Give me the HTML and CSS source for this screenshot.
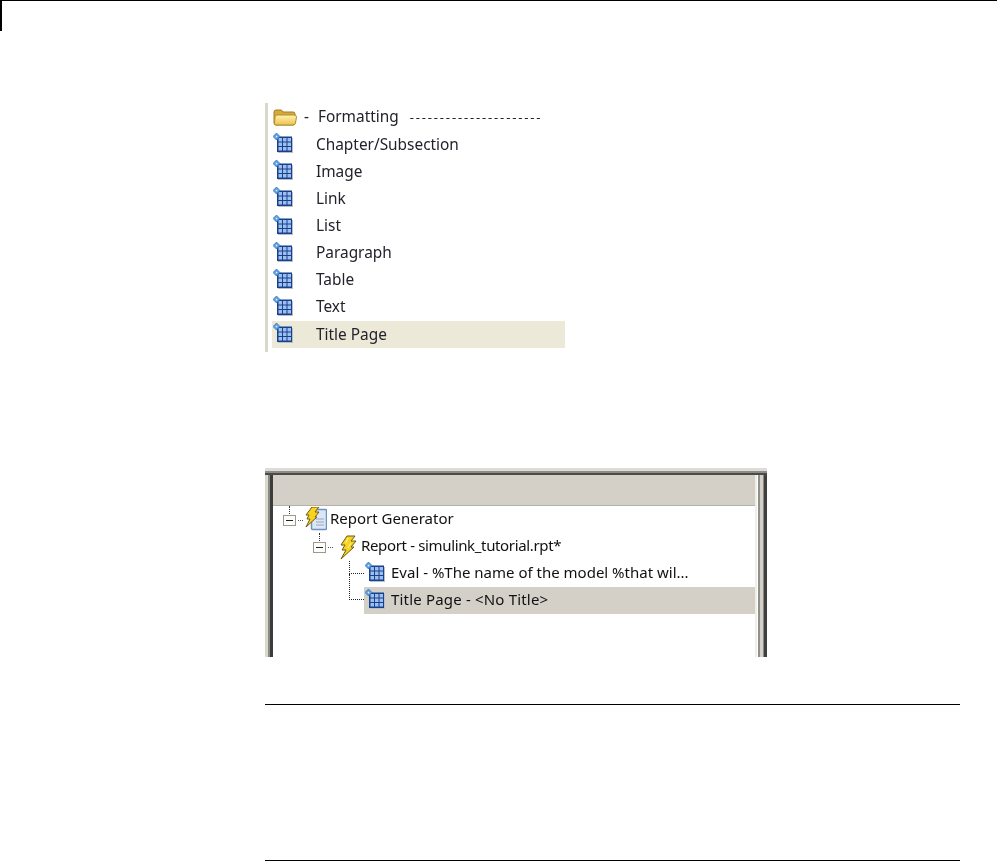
FILE: index.html
```html
<!DOCTYPE html>
<html lang="en">
<head>
<meta charset="utf-8">
<title>Report components</title>
<link rel="stylesheet" href="styles.css">
</head>
<body>
<svg class="defs" width="0" height="0" aria-hidden="true">
  <defs>
    <linearGradient id="folderFront" x1="0" y1="0" x2="0" y2="1">
      <stop offset="0" stop-color="#fff3b0"/>
      <stop offset="1" stop-color="#eec24c"/>
    </linearGradient>
    <symbol id="tbl" viewBox="0 0 20 20">
      <rect x="5" y="5" width="15" height="15" fill="#b9bec8"/>
      <rect x="4" y="3.500" width="15" height="15.500" fill="#17418f"/>
      <g fill="#9dbfee">
        <rect x="5.500" y="5" width="3.500" height="3.500"/><rect x="10" y="5" width="3.500" height="3.500"/><rect x="14.500" y="5" width="3.500" height="3.500"/>
        <rect x="5.500" y="9.500" width="3.500" height="3.500"/><rect x="10" y="9.500" width="3.500" height="3.500"/><rect x="14.500" y="9.500" width="3.500" height="3.500"/>
        <rect x="5.500" y="14" width="3.500" height="3.500"/><rect x="10" y="14" width="3.500" height="3.500"/><rect x="14.500" y="14" width="3.500" height="3.500"/>
      </g>
      <path d="M3.500 0 L7 3.500 L3.500 7 L0 3.500 Z" fill="#5aa0e4" stroke="#2c6cb0" stroke-width=".7"/>
      <rect x="2.800" y="2.800" width="1.500" height="1.500" fill="#e4f0fc"/>
    </symbol>
    <symbol id="bolt" viewBox="0 0 18 24">
      <path d="M8 1 L16 1 L12 6 L17 6 L12 12 L15 12 L2 24 L7 15 L3 15 L6 10 L2 10 Z" fill="#f7d21e" stroke="#6e5a10" stroke-width="1"/>
      <path d="M9 3 L7 8 M12 8 L9 13" stroke="#fff6b0" stroke-width="1"/>
    </symbol>
    <symbol id="expander" viewBox="0 0 13 11">
      <rect x=".5" y=".5" width="12" height="10" fill="#fdfdfb" stroke="#9a9a92"/>
      <rect x="3" y="5" width="7" height="1" fill="#222"/>
    </symbol>
  </defs>
</svg>

<div class="crop-mark"></div>

<main class="content">
  <section class="palette">
    <div class="p-row">
      <svg class="folder" viewBox="0 0 24 17" width="24" height="17" aria-hidden="true">
        <path d="M1 14 V3 Q1 1 3 1 H8 Q9 1 10 3 H20 Q22 3 22 5 V14 Q22 16 20 16 H3 Q1 16 1 14 Z" fill="#d8a93a" stroke="#a07c22"/>
        <path d="M1.500 14.500 L2 8 Q2 6 4 6 H21 Q23.500 6 23.500 8 L22.500 14 Q22 16 20 16 H3 Q1.500 16 1.500 14.500 Z" fill="url(#folderFront)" stroke="#b08f30"/>
      </svg>
      <span class="p-dash">-</span>
      <span class="p-text">Formatting</span>
      <span class="p-rule">----------------------</span>
    </div>
    <div class="p-row"><svg class="tbl"><use href="#tbl"/></svg><span class="p-label">Chapter/Subsection</span></div>
    <div class="p-row"><svg class="tbl"><use href="#tbl"/></svg><span class="p-label">Image</span></div>
    <div class="p-row"><svg class="tbl"><use href="#tbl"/></svg><span class="p-label">Link</span></div>
    <div class="p-row"><svg class="tbl"><use href="#tbl"/></svg><span class="p-label">List</span></div>
    <div class="p-row"><svg class="tbl"><use href="#tbl"/></svg><span class="p-label">Paragraph</span></div>
    <div class="p-row"><svg class="tbl"><use href="#tbl"/></svg><span class="p-label">Table</span></div>
    <div class="p-row"><svg class="tbl"><use href="#tbl"/></svg><span class="p-label">Text</span></div>
    <div class="p-row is-selected"><svg class="tbl"><use href="#tbl"/></svg><span class="p-label">Title Page</span></div>
  </section>

  <section class="tree-window">
    <div class="tree-head"></div>
    <div class="tree-body">
      <div class="t-row t-level0">
        <span class="stem"></span>
        <svg class="expander"><use href="#expander"/></svg>
        <span class="dots"></span>
        <svg class="doc" viewBox="0 0 22 24" width="22" height="24" aria-hidden="true">
          <rect x="6.500" y="2.500" width="15" height="20" rx="1" fill="#dbe6f6" stroke="#6f90c0" stroke-width="1.500"/>
          <path d="M11 12h8M11 15h8M11 18h8" stroke="#9aa7ba"/>
          <path d="M7 0 L14 0 L10 5 L14 5 L10 10 L12 10 L1 20 L5 12 L2 12 L4 8 L1 8 Z" fill="#f7d21e" stroke="#6e5a10"/>
        </svg>
        <span class="t-label">Report Generator</span>
      </div>
      <div class="t-row t-level1">
        <span class="stem"></span>
        <svg class="expander"><use href="#expander"/></svg>
        <span class="dots"></span>
        <svg class="bolt"><use href="#bolt"/></svg>
        <span class="t-label">Report - simulink_tutorial.rpt*</span>
      </div>
      <div class="t-row t-level2 t-first">
        <span class="t-item">
          <svg class="tbl"><use href="#tbl"/></svg>
          <span class="t-label">Eval - %The name of the model %that wil...</span>
        </span>
      </div>
      <div class="t-row t-level2 t-last">
        <span class="t-item t-selected">
          <svg class="tbl"><use href="#tbl"/></svg>
          <span class="t-label">Title Page - &lt;No Title&gt;</span>
        </span>
      </div>
    </div>
  </section>

  <div class="note"></div>
</main>
</body>
</html>
```

FILE: styles.css
```css
html, body {
  margin: 0;
  padding: 0;
  background: #fff;
}
body {
  width: 997px;
  height: 861px;
  overflow: hidden;
  font-family: "Noto Sans", "Liberation Sans", Arial, sans-serif;
  color: #22222c;
}
.defs { display: block; height: 0; }
.crop-mark {
  height: 31px;
  margin-bottom: -31px;
  border-top: 1px solid #000;
  border-left: 2px solid #000;
  box-sizing: border-box;
}
.content {
  display: flex;
  flex-direction: column;
  padding: 103px 37px 0 265px;
}

/* component palette */
.palette {
  width: 300px;
  height: 249px;
  box-sizing: border-box;
  border-left: 3px solid #d8d8cc;
  padding: 1px 0 0 4px;
}
.p-row {
  display: flex;
  align-items: center;
  height: 27.130px;
  font-size: 15.400px;
  line-height: 22px;
  white-space: nowrap;
}
.is-selected { background: #ece9d8; }
.tbl {
  width: 20px;
  height: 20px;
  flex: none;
  margin: -3px 0 0 1px;
}
.p-label { margin: 0 0 0 23px; filter: blur(.35px); }
.folder { margin-left: 1px; flex: none; }
.p-dash { margin: -1px 0 0 7px; filter: blur(.35px); }
.p-text { margin: -1px 0 0 9px; filter: blur(.35px); }
.p-rule { margin: -1px 0 0 11px; font-size: 13px; letter-spacing: 1.840px; filter: blur(.35px); }

/* tree window */
.tree-window {
  width: 502px;
  height: 190px;
  margin-top: 115px;
  box-sizing: border-box;
  padding: 8px 12px 0 8px;
  background:
    linear-gradient(#fff, #fff) no-repeat 0 0 / 100% 1px,
    linear-gradient(#dedcd4 0, #dedcd4 4px, #8c8c88 4px, #8c8c88 6px, #4a4a48 6px, #4a4a48 8px) no-repeat 0 0 / 100% 8px,
    linear-gradient(90deg, #d8d8cc 0, #d8d8cc 3px, #8a8a86 3px, #8a8a86 5px, #3c3c3a 5px, #3c3c3a 8px) no-repeat 0 0 / 8px 100%,
    linear-gradient(90deg, #efeee8 0, #efeee8 2px, #fff 2px, #fff 3px, #8f8f8c 3px, #8f8f8c 5px, #d4d0c8 5px, #d4d0c8 8px, #8a8a88 8px, #8a8a88 9px, #3f3f3f 9px, #3f3f3f 12px) no-repeat 100% 0 / 12px 100%;
}
.tree-head {
  height: 30px;
  background: #d4d0c8;
  border-bottom: 1px solid #b5b2aa;
}
.t-row {
  display: flex;
  align-items: center;
  height: 27px;
  font-size: 15px;
  line-height: 22px;
  white-space: nowrap;
  color: #111;
  position: relative;
}
.t-level0 { padding-left: 10px; }
.t-level1 { padding-left: 40px; }
.t-level2 { padding-left: 91px; }
.stem {
  position: absolute;
  top: 0;
  margin-left: 6px;
  height: 8px;
  border-left: 1px dotted #333;
}
.expander { width: 13px; height: 11px; flex: none; margin-top: 1px; }
.dots {
  width: 5px;
  height: 0;
  margin: 1px 0 0 2px;
  border-top: 1px dotted #555;
  flex: none;
}
.doc { margin: -1px 0 0 2px; flex: none; }
.bolt { width: 18px; height: 24px; margin-left: 6px; flex: none; }
.t-label { margin: -3px 0 0 3px; filter: blur(.35px); }
.t-level1 .t-label { margin-left: 4px; letter-spacing: -.350px; }
.t-level2 .t-label { margin-left: 6px; }
.t-last .t-label { letter-spacing: .180px; }
.t-first::before,
.t-last::before {
  content: "";
  position: absolute;
  left: 76px;
  width: 15px;
  border-left: 1px dotted #222;
  border-bottom: 1px dotted #222;
  box-sizing: border-box;
}
.t-first::before { top: 1px; height: 13px; }
.t-last::before { top: -13px; height: 26px; }
.t-item {
  display: flex;
  align-items: center;
  flex: 1;
  height: 27px;
}
.t-selected { background: #d4d0c8; }

/* note */
.note {
  height: 155px;
  width: 695px;
  margin-top: 47px;
  border-top: 1px solid #000;
  border-bottom: 1px solid #000;
}
```
